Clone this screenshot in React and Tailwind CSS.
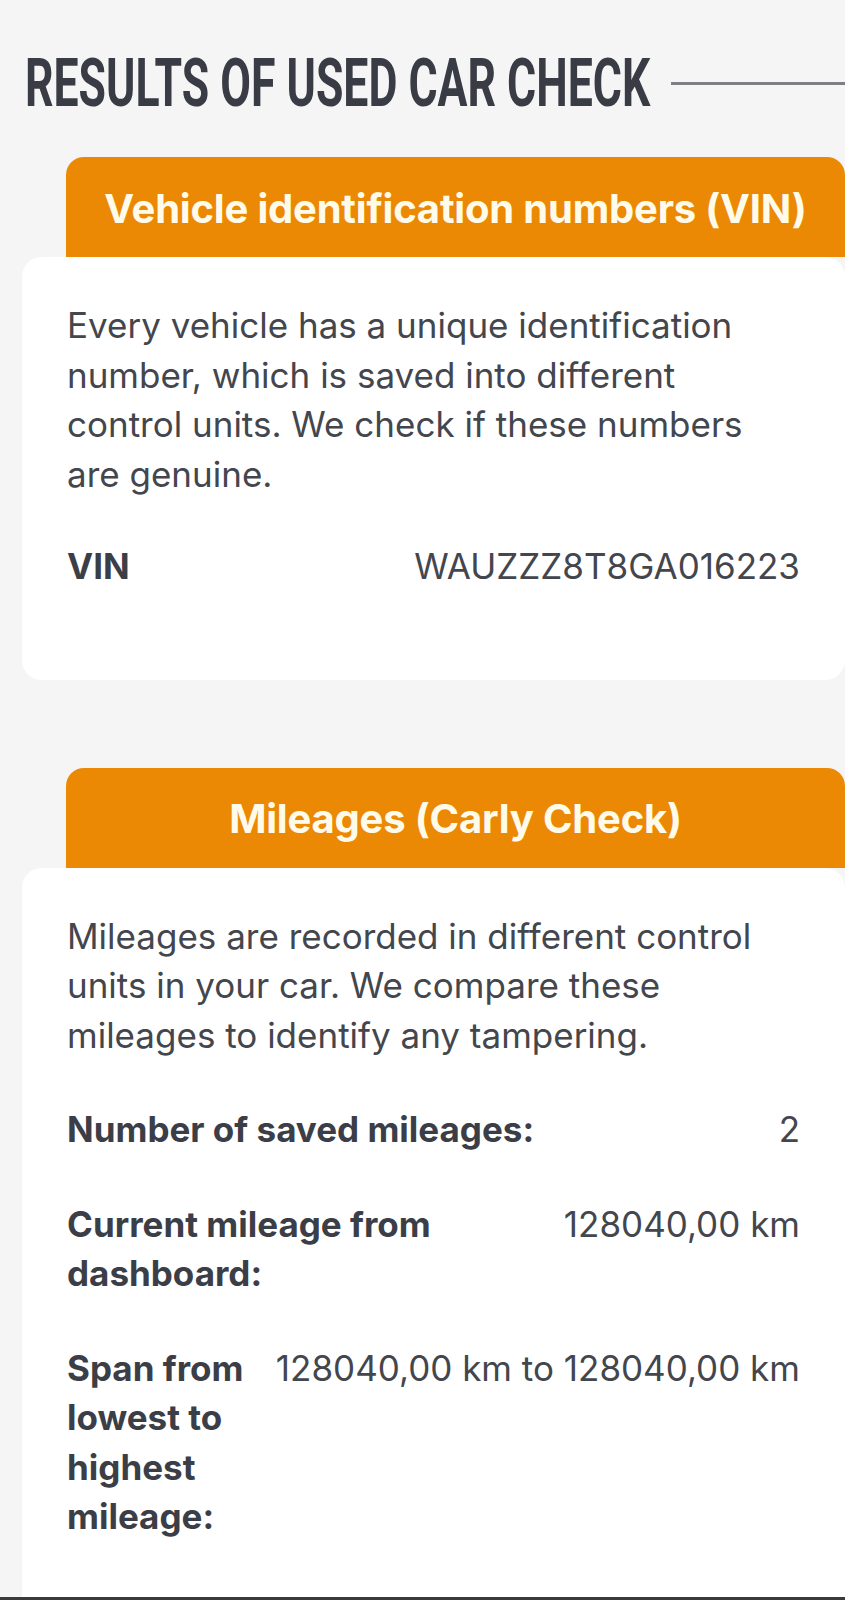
const ROWS = [
    { label: "Number of saved mileages:", value: "2" },
    { label: "Current mileage from dashboard:", value: "128040,00 km" },
    { label: "Span from lowest to highest mileage:", value: "128040,00 km to 128040,00 km" },
];

function SectionHeader({ title }) {
    return (
        <div className="ml-[66px] w-[779px] h-[100px] pt-[3px] rounded-t-[18px] bg-[#ec8904] flex items-center justify-center">
            <h2 className="text-[40px] font-bold text-[#fffbea] tracking-[-0.2px]">{title}</h2>
        </div>
    );
}

function Row({ label, value, className }) {
    return (
        <div className={"flex items-start gap-[30px] " + className}>
            <div className="flex-1 min-w-0 font-bold text-[#3b3e46]">{label}</div>
            <div className="shrink-0 whitespace-nowrap text-right text-[#44464d]">{value}</div>
        </div>
    );
}

export default function App() {
    return (
        <div className="relative w-[845px] h-[1600px] overflow-hidden bg-[#f5f5f6] font-['Inter',sans-serif]">
            {/* page title */}
            <div className="mt-[49px] flex items-center">
                <div className="ml-[25px] w-[623px] h-[68px] shrink-0">
                    <span className="inline-block origin-left scale-x-[0.66] whitespace-nowrap font-['Roboto',sans-serif] font-bold text-[67.5px] leading-none text-[#393c44]">
                        RESULTS OF USED CAR CHECK
                    </span>
                </div>
                <div className="ml-[23px] flex-1 h-[3px] bg-[#7d7f84]" />
            </div>

            {/* VIN */}
            <div className="mt-[40px]">
                <SectionHeader title="Vehicle identification numbers (VIN)" />
                <div className="ml-[22px] w-[823px] rounded-[20px] bg-white px-[45px] pt-[44px] pb-[88px] text-[35px] leading-[49.5px]">
                    <p className="text-[#44464d]">
                        Every vehicle has a unique identification number, which is saved into different control units. We check if these numbers are genuine.
                    </p>
                    <Row className="mt-[43px]" label="VIN" value="WAUZZZ8T8GA016223" />
                </div>
            </div>

            {/* Mileages */}
            <div className="mt-[88px]">
                <SectionHeader title="Mileages (Carly Check)" />
                <div className="ml-[22px] w-[823px] rounded-[20px] bg-white px-[45px] pt-[44px] pb-[60px] text-[35px] leading-[49.5px]">
                    <p className="text-[#44464d]">
                        Mileages are recorded in different control units in your car. We compare these mileages to identify any tampering.
                    </p>
                    {ROWS.map((r) => (
                        <Row key={r.label} className="mt-[45px]" {...r} />
                    ))}
                    <p className="mt-[45px] text-[#44464d]">
                        If the mileage in the dashboard is the lowest value, it might have been tampered with.
                    </p>
                </div>
            </div>

            <div className="absolute bottom-0 left-0 w-full h-[3px] bg-[#3a3a3a]" />
        </div>
    );
}
